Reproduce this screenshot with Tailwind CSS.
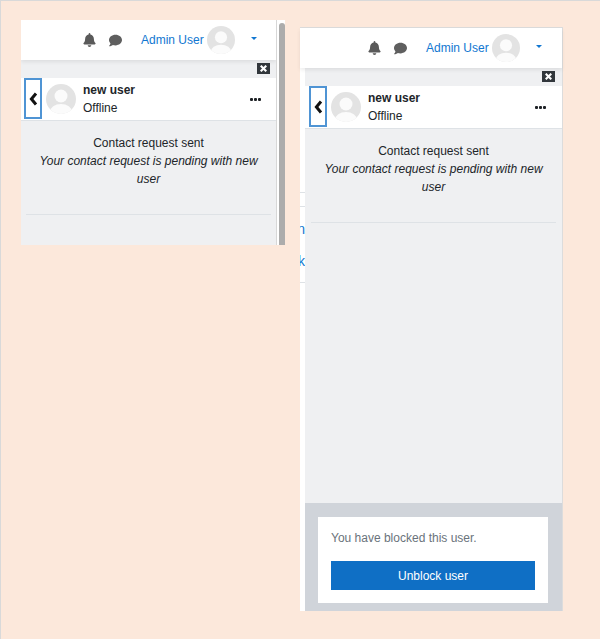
<!DOCTYPE html>
<html lang="en">
<head>
    <meta charset="UTF-8">
    <meta name="viewport" content="width=device-width, initial-scale=1.0">
    <title>Messaging drawer</title>
    <script src="https://cdn.jsdelivr.net/npm/@tailwindcss/browser@4"></script>
</head>
<body class="w-[600px] h-[639px] overflow-hidden bg-[#fce8db] font-['Liberation_Sans',sans-serif] text-[12px] leading-[18px] text-[#212529]">
<div class="h-full flex items-start border-t border-l border-[#d9d9d9]">

    <!-- drawer with scrollbar -->
    <div class="mt-[19px] ml-[20px] w-[264px] h-[225px] flex bg-white">
        <div class="w-[255px] h-full flex flex-col bg-[#eff0f2] overflow-hidden">
            <header class="h-[40px] shrink-0 flex items-center bg-white shadow-[0_2px_4px_rgba(0,0,0,0.08)] relative">
                <svg class="w-[13px] h-[14px] ml-[62px] -mt-[1px] text-[#5a5a5a]" viewBox="0 0 448 512" fill="currentColor"><path d="M224 512c35.32 0 63.97-28.65 63.97-64H160.03c0 35.35 28.65 64 63.97 64zm215.39-149.71c-19.32-20.76-55.47-51.99-55.47-154.29 0-77.7-54.48-139.9-127.94-155.16V32c0-17.67-14.32-32-31.98-32s-31.98 14.33-31.98 32v20.84C118.56 68.1 64.08 130.3 64.08 208c0 102.3-36.15 133.53-55.47 154.29-6 6.45-8.66 14.16-8.61 21.71.11 16.4 12.98 32 32.1 32h383.8c19.12 0 32-15.6 32.1-32 .05-7.55-2.61-15.27-8.61-21.71z"/></svg>
                <svg class="w-[13px] h-[13px] ml-[13px] text-[#5f5f5f]" viewBox="0 0 512 512" fill="currentColor"><path d="M256 32C114.6 32 0 125.1 0 240c0 49.6 21.4 95 57 130.7C44.5 421.1 2.7 466 2.2 466.5c-2.2 2.3-2.8 5.7-1.5 8.7S4.8 480 8 480c66.3 0 116-31.8 140.6-51.4 32.7 12.3 69 19.4 107.4 19.4 141.4 0 256-93.1 256-208S397.4 32 256 32z"/></svg>
                <span class="ml-[19px] text-[#1177d1] whitespace-nowrap">Admin User</span>
                <svg class="w-[28px] h-[28px] ml-[3px] -mt-[1px]" viewBox="0 0 30 30"><defs><clipPath id="a1"><circle cx="15" cy="15" r="15"/></clipPath></defs><circle cx="15" cy="15" r="15" fill="#e3e3e3"/><g clip-path="url(#a1)" fill="#fbfbfb"><circle cx="15" cy="12" r="6.5"/><ellipse cx="15" cy="28" rx="11" ry="8"/></g></svg>
                <span class="ml-[16px] -mt-[3px] w-0 h-0 border-x-[3.5px] border-x-transparent border-t-[3px] border-t-[#1177d1]"></span>
            </header>
            <div class="h-[18px] shrink-0 flex justify-end items-start pt-[3px] pr-[6px]">
                <span class="w-[13px] h-[11px] flex items-center justify-center bg-[#32373c]">
                    <svg class="w-[7px] h-[7px]" viewBox="0 0 10 10" stroke="#fff" stroke-width="3"><path d="M1 1l8 8M9 1l-8 8"/></svg>
                </span>
            </div>
            <div class="h-[43px] shrink-0 flex items-center bg-white border-b border-[#dee2e6] pl-[3px]">
                <button class="w-[18px] h-[41px] -mt-[1px] flex items-center justify-center border-2 border-[#4f94d4]">
                    <svg class="w-[9px] h-[14px]" viewBox="0 0 9 14" fill="none" stroke="#111" stroke-width="3"><path d="M7 1.5L2.4 7 7 12.5"/></svg>
                </button>
                <svg class="w-[30px] h-[30px] ml-[4px]" viewBox="0 0 30 30"><defs><clipPath id="a2"><circle cx="15" cy="15" r="15"/></clipPath></defs><circle cx="15" cy="15" r="15" fill="#e3e3e3"/><g clip-path="url(#a2)" fill="#fbfbfb"><circle cx="15" cy="12" r="6.5"/><ellipse cx="15" cy="28" rx="11" ry="8"/></g></svg>
                <div class="ml-[7px] flex-1">
                    <div class="font-bold">new user</div>
                    <div>Offline</div>
                </div>
                <div class="flex gap-[1px] mr-[15px]">
                    <span class="w-[3px] h-[3px] rounded-[1px] bg-[#1d2125]"></span>
                    <span class="w-[3px] h-[3px] rounded-[1px] bg-[#1d2125]"></span>
                    <span class="w-[3px] h-[3px] rounded-[1px] bg-[#1d2125]"></span>
                </div>
            </div>
            <div class="pt-[13px] px-[5px] text-center">
                <div>Contact request sent</div>
                <div class="italic px-[8px]">Your contact request is pending with new user</div>
                <div class="mt-[26px] border-t border-[#dee2e6]"></div>
            </div>
        </div>
        <div class="w-[9px] h-full border-l border-[#d7d7d7] pl-[2px] pt-[3px]">
            <div class="w-[6px] h-full rounded-t-[3px] bg-[#acacac]"></div>
        </div>
    </div>

    <!-- full height drawer -->
    <div class="mt-[26px] ml-[15px] w-[263px] h-[584px] flex flex-col bg-white border-t border-r border-[#dcdcdc]">
        <header class="h-[40px] shrink-0 flex items-center bg-white shadow-[0_2px_4px_rgba(0,0,0,0.08)] relative z-10">
            <svg class="w-[13px] h-[14px] ml-[68px] -mt-[1px] text-[#5a5a5a]" viewBox="0 0 448 512" fill="currentColor"><path d="M224 512c35.32 0 63.97-28.65 63.97-64H160.03c0 35.35 28.65 64 63.97 64zm215.39-149.71c-19.32-20.76-55.47-51.99-55.47-154.29 0-77.7-54.48-139.9-127.94-155.16V32c0-17.67-14.32-32-31.98-32s-31.98 14.33-31.98 32v20.84C118.56 68.1 64.08 130.3 64.08 208c0 102.3-36.15 133.53-55.47 154.29-6 6.45-8.66 14.16-8.61 21.71.11 16.4 12.98 32 32.1 32h383.8c19.12 0 32-15.6 32.1-32 .05-7.55-2.61-15.27-8.61-21.71z"/></svg>
            <svg class="w-[13px] h-[13px] ml-[13px] text-[#5f5f5f]" viewBox="0 0 512 512" fill="currentColor"><path d="M256 32C114.6 32 0 125.1 0 240c0 49.6 21.4 95 57 130.7C44.5 421.1 2.7 466 2.2 466.5c-2.2 2.3-2.8 5.7-1.5 8.7S4.8 480 8 480c66.3 0 116-31.8 140.6-51.4 32.7 12.3 69 19.4 107.4 19.4 141.4 0 256-93.1 256-208S397.4 32 256 32z"/></svg>
            <span class="ml-[19px] text-[#1177d1] whitespace-nowrap">Admin User</span>
            <svg class="w-[28px] h-[28px] ml-[3px] -mt-[1px]" viewBox="0 0 30 30"><defs><clipPath id="a3"><circle cx="15" cy="15" r="15"/></clipPath></defs><circle cx="15" cy="15" r="15" fill="#e3e3e3"/><g clip-path="url(#a3)" fill="#fbfbfb"><circle cx="15" cy="12" r="6.5"/><ellipse cx="15" cy="28" rx="11" ry="8"/></g></svg>
            <span class="ml-[16px] -mt-[3px] w-0 h-0 border-x-[3.5px] border-x-transparent border-t-[3px] border-t-[#1177d1]"></span>
        </header>
        <div class="flex-1 flex min-h-0">
            <!-- page behind the drawer, cut off -->
            <div class="w-[5px] shrink-0 text-[14px] text-[#1177d1] overflow-hidden">
                <div class="h-[125px] border-b border-[#dee2e6]"></div>
                <div class="h-[14px] border-b border-[#dee2e6]"></div>
                <div class="h-[18px] mt-[13px] flex justify-end whitespace-nowrap">Admin</div>
                <div class="h-[18px] mt-[14px] flex justify-end whitespace-nowrap">Link</div>
                <div class="h-[13px] border-b border-[#dee2e6]"></div>
            </div>
            <div class="flex-1 flex flex-col bg-[#eff0f2]">
                <div class="h-[18px] shrink-0 flex justify-end items-start pt-[3px] pr-[7px]">
                    <span class="w-[13px] h-[11px] flex items-center justify-center bg-[#32373c]">
                        <svg class="w-[7px] h-[7px]" viewBox="0 0 10 10" stroke="#fff" stroke-width="3"><path d="M1 1l8 8M9 1l-8 8"/></svg>
                    </span>
                </div>
                <div class="h-[43px] shrink-0 flex items-center bg-white border-b border-[#dee2e6]">
                    <button class="w-[18px] h-[41px] -mt-[1px] ml-[4px] flex items-center justify-center border-2 border-[#4f94d4]">
                        <svg class="w-[9px] h-[14px]" viewBox="0 0 9 14" fill="none" stroke="#111" stroke-width="3"><path d="M7 1.5L2.4 7 7 12.5"/></svg>
                    </button>
                    <svg class="w-[30px] h-[30px] ml-[4px]" viewBox="0 0 30 30"><defs><clipPath id="a4"><circle cx="15" cy="15" r="15"/></clipPath></defs><circle cx="15" cy="15" r="15" fill="#e3e3e3"/><g clip-path="url(#a4)" fill="#fbfbfb"><circle cx="15" cy="12" r="6.5"/><ellipse cx="15" cy="28" rx="11" ry="8"/></g></svg>
                    <div class="ml-[7px] flex-1">
                        <div class="font-bold">new user</div>
                        <div>Offline</div>
                    </div>
                    <div class="flex gap-[1px] mr-[16px]">
                        <span class="w-[3px] h-[3px] rounded-[1px] bg-[#1d2125]"></span>
                        <span class="w-[3px] h-[3px] rounded-[1px] bg-[#1d2125]"></span>
                        <span class="w-[3px] h-[3px] rounded-[1px] bg-[#1d2125]"></span>
                    </div>
                </div>
                <div class="flex-1 pt-[13px] px-[6px] text-center">
                    <div>Contact request sent</div>
                    <div class="italic px-[8px]">Your contact request is pending with new user</div>
                    <div class="mt-[26px] border-t border-[#dee2e6]"></div>
                </div>
                <div class="h-[108px] shrink-0 bg-[#d0d4da] pt-[14px] pl-[13px] pr-[14px]">
                    <div class="h-[86px] bg-white px-[13px] pt-[12px]">
                        <p class="text-[#6a737b]">You have blocked this user.</p>
                        <button class="mt-[14px] w-full h-[29px] bg-[#0f6fc5] text-white">Unblock user</button>
                    </div>
                </div>
            </div>
        </div>
    </div>
</div>
</body>
</html>
